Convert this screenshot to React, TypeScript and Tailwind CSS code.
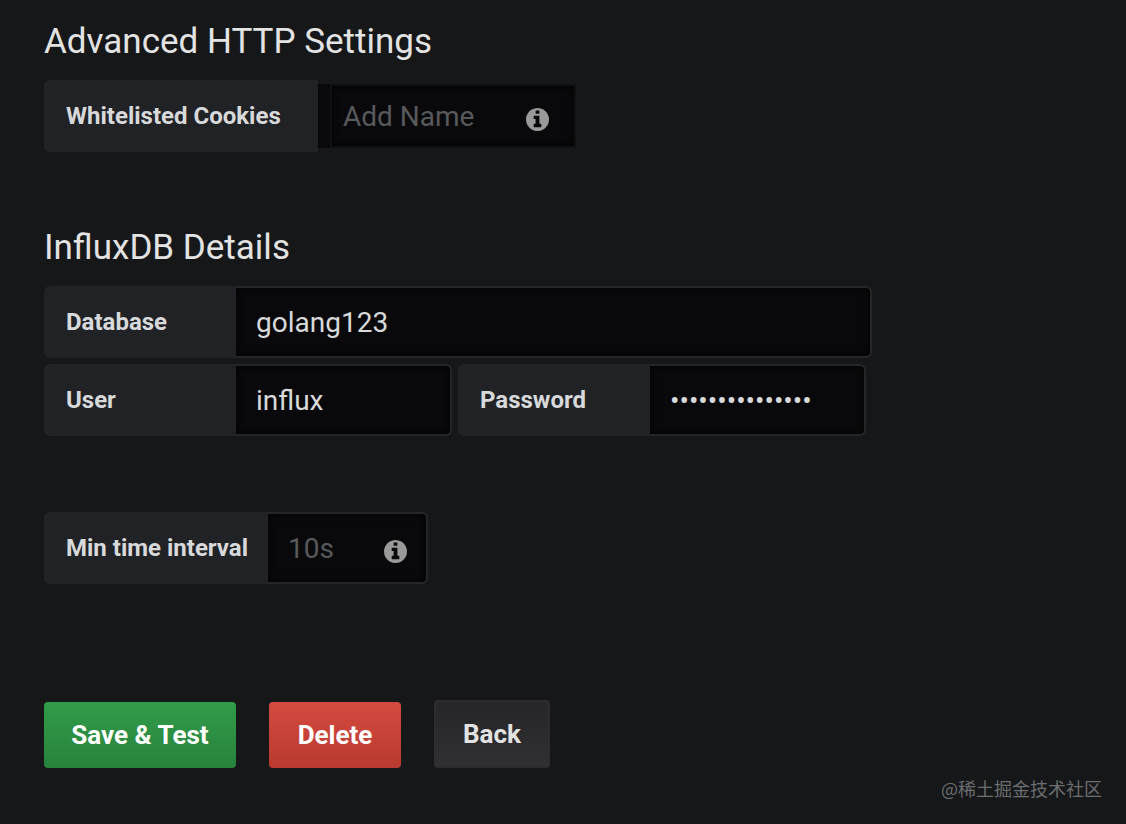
import * as React from 'react'
import clsx from 'clsx'

interface LabelProps {
  htmlFor: string
  className?: string
  children: React.ReactNode
}

function FormLabel({ htmlFor, className, children }: LabelProps) {
  return (
    <label
      htmlFor={htmlFor}
      className={clsx(
        'flex h-[72px] shrink-0 items-center rounded-l-md bg-[#212226] pl-[22px] text-2xl leading-6 font-bold whitespace-nowrap',
        className
      )}
    >
      {children}
    </label>
  )
}

function FormInput({
  className,
  ...props
}: React.InputHTMLAttributes<HTMLInputElement>) {
  return (
    <input
      className={clsx(
        'h-[72px] min-w-0 rounded-r-md border-2 border-l-0 border-[#252628] bg-[#09090b] pl-5 text-[28px] shadow-[inset_0_0_6px_#000] outline-none placeholder:text-[#58595b]',
        className
      )}
      {...props}
    />
  )
}

function Heading({ children }: { children: React.ReactNode }) {
  return (
    <h3 className="mb-[18px] text-[35px] leading-10 text-[#e3e3e3]">
      {children}
    </h3>
  )
}

function InfoIcon({ className }: { className?: string }) {
  return (
    <svg
      viewBox="0 0 1536 1536"
      fill="currentColor"
      aria-hidden="true"
      className={clsx(
        'pointer-events-none absolute mt-1.5 size-[23px] text-[#9a9a9a]',
        className
      )}
    >
      <path d="M1024 1248v-160q0-14-9-23t-23-9h-96v-512q0-14-9-23t-23-9h-320q-14 0-23 9t-9 23v160q0 14 9 23t23 9h96v320h-96q-14 0-23 9t-9 23v160q0 14 9 23t23 9h448q14 0 23-9t9-23zM896 352v-160q0-14-9-23t-23-9h-192q-14 0-23 9t-9 23v160q0 14 9 23t23 9h192q14 0 23-9t9-23zM1536 768q0 209-103 385.5t-279.5 279.5-385.5 103-385.5-103-279.5-279.5-103-385.5 103-385.5 279.5-279.5 385.5-103 385.5 103 279.5 279.5 103 385.5z" />
    </svg>
  )
}

export default function App() {
  return (
    <main className="flex min-h-screen flex-col bg-[#161719] pt-[22px] pl-11 font-['Roboto',sans-serif] text-[#d8d9da]">
      <section className="mb-[76px]">
        <Heading>Advanced HTTP Settings</Heading>
        <div className="flex items-center">
          <FormLabel htmlFor="cookies" className="w-[274px]">
            Whitelisted Cookies
          </FormLabel>
          <div className="relative flex items-center bg-[#09090b] pl-3">
            <input
              id="cookies"
              placeholder="Add Name"
              className="h-16 w-[246px] border-2 border-[#0f1012] pl-[11px] text-[28px] shadow-[inset_0_0_6px_#000] outline-none placeholder:text-[#58595b]"
            />
            <InfoIcon className="right-[27px]" />
          </div>
        </div>
      </section>

      <section className="mb-[76px]">
        <Heading>InfluxDB Details</Heading>
        <div className="mb-1.5 flex max-w-[828px]">
          <FormLabel htmlFor="database" className="w-48">
            Database
          </FormLabel>
          <FormInput id="database" defaultValue="golang123" className="flex-1" />
        </div>
        <div className="flex flex-wrap gap-1.5">
          <div className="flex">
            <FormLabel htmlFor="user" className="w-48">
              User
            </FormLabel>
            <FormInput id="user" defaultValue="influx" className="w-[216px]" />
          </div>
          <div className="flex">
            <FormLabel htmlFor="password" className="w-48">
              Password
            </FormLabel>
            <FormInput
              id="password"
              type="password"
              defaultValue="influxpassword1"
              className="w-[216px]"
            />
          </div>
        </div>
      </section>

      <div className="mb-[116px] flex">
        <FormLabel htmlFor="interval" className="w-56">
          Min time interval
        </FormLabel>
        <div className="relative flex items-center">
          <FormInput id="interval" placeholder="10s" className="w-40" />
          <InfoIcon className="right-[21px]" />
        </div>
      </div>

      <div className="flex items-end gap-[33px] text-[26px] font-bold">
        <button className="h-[66px] w-48 rounded bg-linear-to-b from-[#319c4a] to-[#28823c] text-white">
          Save &amp; Test
        </button>
        <button className="h-[66px] w-[132px] rounded bg-linear-to-b from-[#d44a3f] to-[#b93a30] text-white">
          Delete
        </button>
        <button className="h-[68px] w-[116px] rounded border-2 border-[#2d2d30] bg-linear-to-b from-[#262628] to-[#303032] text-[#e3e3e3]">
          Back
        </button>
      </div>

      <footer className="mt-2 pr-6 text-right font-['Noto_Sans_CJK_SC',sans-serif] text-lg leading-6 text-[#6c6d6e]">
        @稀土掘金技术社区
      </footer>
    </main>
  )
}
